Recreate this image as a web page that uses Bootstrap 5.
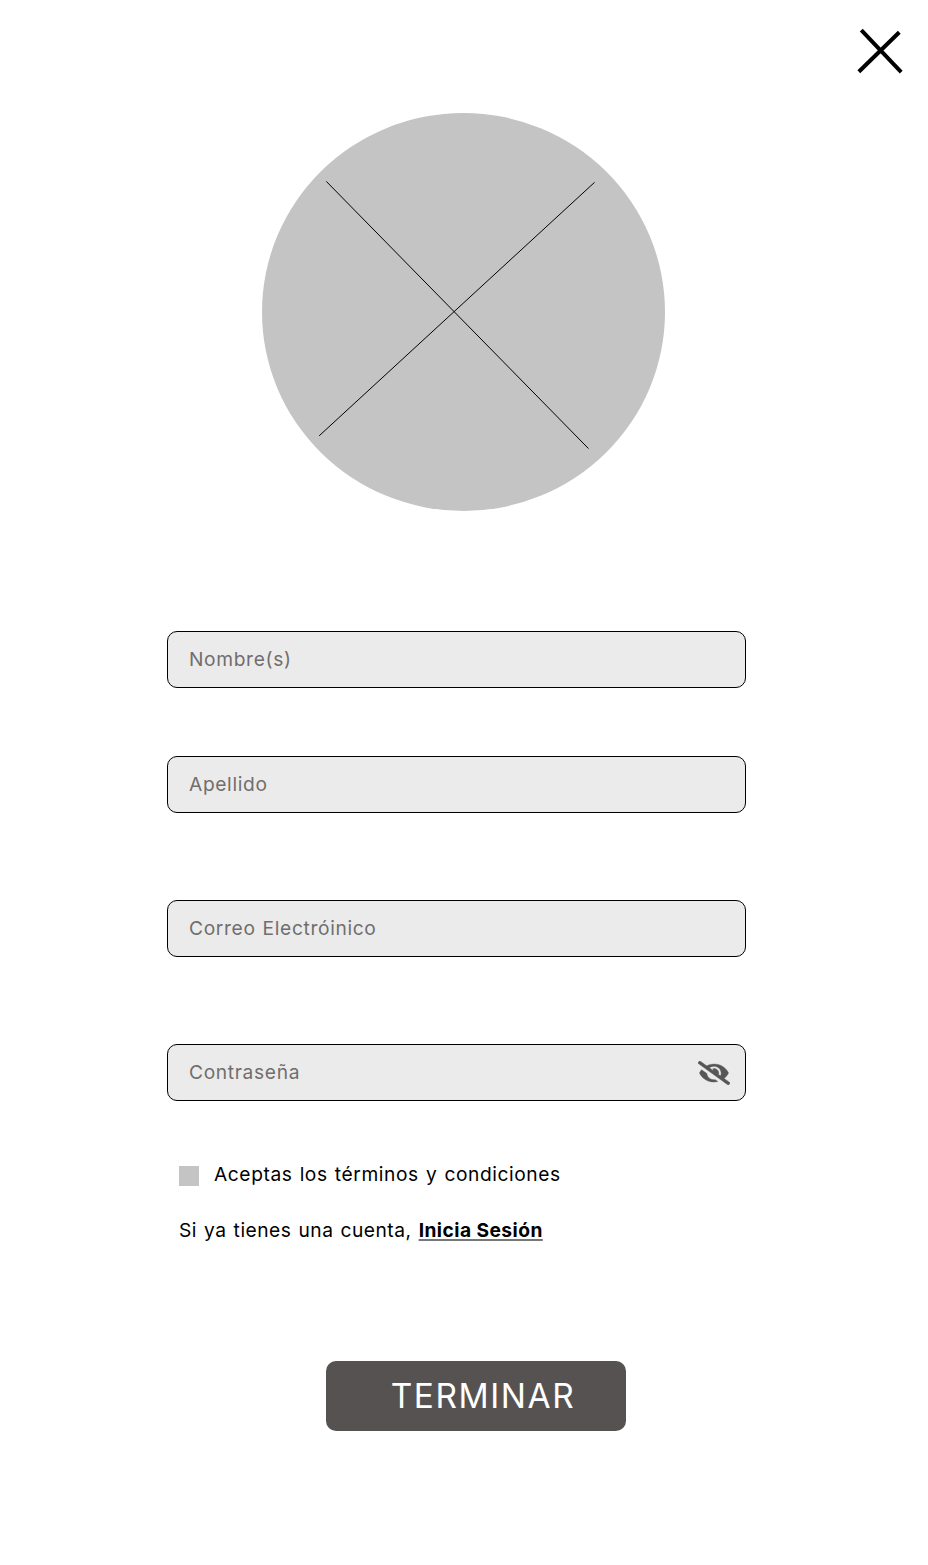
<!DOCTYPE html>
<html lang="es">
<head>
<meta charset="utf-8">
<meta name="viewport" content="width=device-width, initial-scale=1">
<title>Registro</title>
<link rel="stylesheet" href="https://cdn.jsdelivr.net/npm/bootstrap@5.3.0/dist/css/bootstrap.min.css">
<style>
  body { font-family: Inter, "Liberation Sans", sans-serif; color: #000; background: #fff; }
  .signup { width: 928px; height: 1565px; overflow: hidden; }
  .topbar { height: 113px; padding: 27px 24px 0 0; }
  .avatar { margin-left: 262px; }
  .signup-form { width: 579px; margin: 120px 0 0 167px; }
  .field { height: 57px; border: 1px solid #000; border-radius: 10px; background: #ebebeb; padding: 0 15px 0 21px; }
  .field .form-control { font-size: 19.2px; letter-spacing: .65px; word-spacing: 1px; color: #000; line-height: 28px; margin-bottom: 2px; }
  .field .form-control::placeholder { color: #716e6e; opacity: 1; }
  .gap-a { margin-top: 68px; }
  .gap-b { margin-top: 87px; }
  .notes { margin: 59px 0 0 12px; font-size: 19.2px; line-height: 28px; white-space: nowrap; }
  .terms { letter-spacing: .58px; word-spacing: 1.2px; }
  .terms .form-check-input { width: 20px; height: 20px; border: 0; border-radius: 0; background-color: #c4c4c4; margin: 3px 15px 0 0; }
  .login { margin-top: 28px; letter-spacing: .5px; word-spacing: 1.2px; }
  .login a { color: #000; font-weight: 700; letter-spacing: .45px; word-spacing: 0; text-decoration: underline; text-decoration-color: #777; text-decoration-thickness: 2px; text-underline-offset: 2px; text-decoration-skip-ink: none; }
  .btn-finish { width: 300px; height: 70px; margin: 117px 0 0 326px; padding: 0 0 0 14px; border: 0; border-radius: 10px; background: #565252; color: #fff; font-size: 33.4px; line-height: 70px; letter-spacing: 1.6px; }
  .btn-finish:hover { background: #454141; color: #fff; }
</style>
</head>
<body>
<main class="signup d-flex flex-column">
  <header class="topbar d-flex justify-content-end align-items-start">
    <a href="#" aria-label="Cerrar" class="d-block lh-1">
      <svg class="d-block" width="48" height="48" viewBox="0 0 48 48" stroke="#000" stroke-width="4"><path d="M5.3 3.2 45.2 45.2M43.3 5.2 2.8 44.7"/></svg>
    </a>
  </header>

  <svg class="avatar d-block flex-shrink-0" width="403" height="398" viewBox="0 0 403 398" aria-hidden="true">
    <ellipse cx="201.5" cy="199" rx="201.5" ry="199" fill="#c4c4c4"/>
    <path d="M64.3 68.4 326.5 335.6M332.6 69.3 57.2 322.8" stroke="#000" stroke-width="1"/>
  </svg>

  <form class="signup-form">
    <div class="field d-flex align-items-center">
      <input class="form-control border-0 bg-transparent p-0 shadow-none" type="text" placeholder="Nombre(s)">
    </div>
    <div class="field gap-a d-flex align-items-center">
      <input class="form-control border-0 bg-transparent p-0 shadow-none" type="text" placeholder="Apellido">
    </div>
    <div class="field gap-b d-flex align-items-center">
      <input class="form-control border-0 bg-transparent p-0 shadow-none" type="email" placeholder="Correo Electróinico">
    </div>
    <div class="field gap-b d-flex align-items-center">
      <input class="form-control border-0 bg-transparent p-0 shadow-none" type="password" placeholder="Contraseña">
      <svg class="flex-shrink-0" width="32" height="24" viewBox="0 0 640 512" preserveAspectRatio="none" fill="#565656" stroke="#565656" stroke-width="8" aria-hidden="true"><path d="M320 400c-75.85 0-137.25-58.71-142.9-133.11L72.2 185.82c-13.79 17.3-26.48 35.59-36.72 55.59a32.35 32.35 0 0 0 0 29.19C89.71 376.41 197.07 448 320 448c26.91 0 52.87-4 77.89-10.46L346 397.39a144.13 144.13 0 0 1-26 2.61zm313.82 58.1l-110.55-85.44a331.25 331.25 0 0 0 81.25-102.07 32.35 32.35 0 0 0 0-29.19C550.29 135.59 442.93 64 320 64a308.15 308.15 0 0 0-147.32 37.7L45.46 3.37A16 16 0 0 0 23 6.18L3.37 31.45A16 16 0 0 0 6.18 53.9l588.36 454.73a16 16 0 0 0 22.46-2.81l19.64-25.27a16 16 0 0 0-2.82-22.45zm-183.72-142l-39.3-30.38A94.75 94.75 0 0 0 416 256a94.76 94.76 0 0 0-121.31-92.21A47.65 47.65 0 0 1 304 192a46.64 46.64 0 0 1-1.54 10l-73.61-56.89A142.31 142.31 0 0 1 320 112a143.92 143.92 0 0 1 144 144c0 21.63-5.29 41.79-13.9 60.11z"/></svg>
    </div>
    <div class="notes">
      <div class="terms d-flex align-items-center">
        <input class="form-check-input flex-shrink-0" type="checkbox" id="terms">
        <label for="terms">Aceptas los términos y condiciones</label>
      </div>
      <p class="login mb-0">Si ya tienes una cuenta, <a href="#">Inicia Sesión</a></p>
    </div>
  </form>

  <button type="button" class="btn btn-finish flex-shrink-0">TERMINAR</button>
</main>
<script src="https://cdn.jsdelivr.net/npm/bootstrap@5.3.0/dist/js/bootstrap.bundle.min.js"></script>
</body>
</html>
